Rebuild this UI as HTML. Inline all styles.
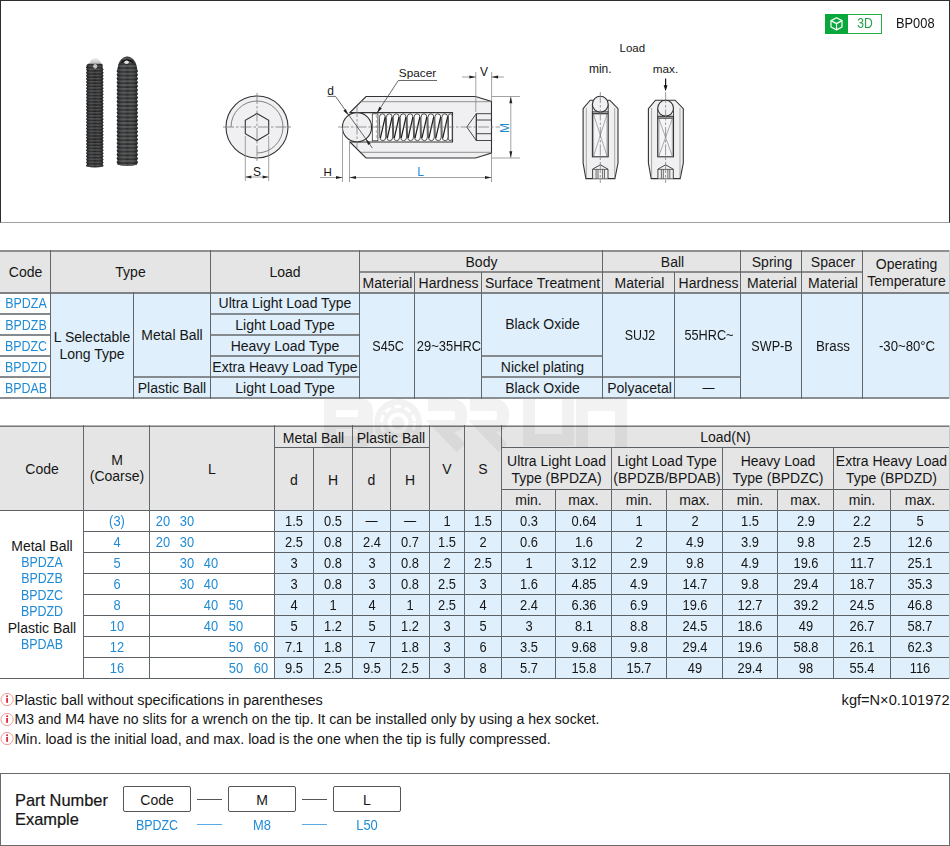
<!DOCTYPE html>
<html><head><meta charset="utf-8"><style>
html,body{margin:0;padding:0;background:#fff;width:950px;height:846px;overflow:hidden}
body{position:relative;font-family:"Liberation Sans", sans-serif;color:#161616}
div,svg{position:absolute}
</style></head><body>
<div style="left:0;top:0;width:950px;height:223px;box-sizing:border-box;border:1px solid #2e2e2e;border-bottom-color:#a0a0a0"></div>
<div style="left:0px;top:250px;width:950px;height:42px;background:#e5e5e5"></div>
<div style="left:50px;top:292px;width:900px;height:106px;background:#dfeffb"></div>
<div style="left:0px;top:292px;width:50px;height:106px;background:#fff"></div>
<div style="left:-274.50px;top:257.10px;width:600px;height:30px;line-height:30px;text-align:center;font-size:14px;">Code</div>
<div style="left:-169.50px;top:257.10px;width:600px;height:30px;line-height:30px;text-align:center;font-size:14px;">Type</div>
<div style="left:-15.00px;top:257.10px;width:600px;height:30px;line-height:30px;text-align:center;font-size:14px;">Load</div>
<div style="left:181.50px;top:247.10px;width:600px;height:30px;line-height:30px;text-align:center;font-size:14px;">Body</div>
<div style="left:87.50px;top:267.60px;width:600px;height:30px;line-height:30px;text-align:center;font-size:14px;">Material</div>
<div style="left:148.50px;top:267.60px;width:600px;height:30px;line-height:30px;text-align:center;font-size:14px;">Hardness</div>
<div style="left:242.50px;top:267.60px;width:600px;height:30px;line-height:30px;text-align:center;font-size:14px;">Surface Treatment</div>
<div style="left:372.50px;top:247.10px;width:600px;height:30px;line-height:30px;text-align:center;font-size:14px;">Ball</div>
<div style="left:339.50px;top:267.60px;width:600px;height:30px;line-height:30px;text-align:center;font-size:14px;">Material</div>
<div style="left:408.50px;top:267.60px;width:600px;height:30px;line-height:30px;text-align:center;font-size:14px;">Hardness</div>
<div style="left:472.00px;top:247.10px;width:600px;height:30px;line-height:30px;text-align:center;font-size:14px;">Spring</div>
<div style="left:472.00px;top:267.60px;width:600px;height:30px;line-height:30px;text-align:center;font-size:14px;">Material</div>
<div style="left:533.00px;top:247.10px;width:600px;height:30px;line-height:30px;text-align:center;font-size:14px;">Spacer</div>
<div style="left:533.00px;top:267.60px;width:600px;height:30px;line-height:30px;text-align:center;font-size:14px;">Material</div>
<div style="left:606.50px;top:249.20px;width:600px;height:30px;line-height:30px;text-align:center;font-size:14px;">Operating</div>
<div style="left:606.50px;top:265.60px;width:600px;height:30px;line-height:30px;text-align:center;font-size:14px;">Temperature</div>
<div style="left:-274.50px;top:288.30px;width:600px;height:30px;line-height:30px;text-align:center;font-size:14px;color:#1f8bd6;transform:scaleX(0.89);transform-origin:50% 50%;">BPDZA</div>
<div style="left:-274.50px;top:309.80px;width:600px;height:30px;line-height:30px;text-align:center;font-size:14px;color:#1f8bd6;transform:scaleX(0.89);transform-origin:50% 50%;">BPDZB</div>
<div style="left:-274.50px;top:330.80px;width:600px;height:30px;line-height:30px;text-align:center;font-size:14px;color:#1f8bd6;transform:scaleX(0.89);transform-origin:50% 50%;">BPDZC</div>
<div style="left:-274.50px;top:351.80px;width:600px;height:30px;line-height:30px;text-align:center;font-size:14px;color:#1f8bd6;transform:scaleX(0.89);transform-origin:50% 50%;">BPDZD</div>
<div style="left:-274.50px;top:372.80px;width:600px;height:30px;line-height:30px;text-align:center;font-size:14px;color:#1f8bd6;transform:scaleX(0.89);transform-origin:50% 50%;">BPDAB</div>
<div style="left:-208.00px;top:322.30px;width:600px;height:30px;line-height:30px;text-align:center;font-size:14px;">L Selectable</div>
<div style="left:-208.00px;top:339.00px;width:600px;height:30px;line-height:30px;text-align:center;font-size:14px;">Long Type</div>
<div style="left:-128.00px;top:319.60px;width:600px;height:30px;line-height:30px;text-align:center;font-size:14px;">Metal Ball</div>
<div style="left:-128.00px;top:372.60px;width:600px;height:30px;line-height:30px;text-align:center;font-size:14px;">Plastic Ball</div>
<div style="left:-15.00px;top:288.00px;width:600px;height:30px;line-height:30px;text-align:center;font-size:14px;">Ultra Light Load Type</div>
<div style="left:-15.00px;top:309.50px;width:600px;height:30px;line-height:30px;text-align:center;font-size:14px;">Light Load Type</div>
<div style="left:-15.00px;top:330.50px;width:600px;height:30px;line-height:30px;text-align:center;font-size:14px;">Heavy Load Type</div>
<div style="left:-15.00px;top:351.50px;width:600px;height:30px;line-height:30px;text-align:center;font-size:14px;">Extra Heavy Load Type</div>
<div style="left:-15.00px;top:372.50px;width:600px;height:30px;line-height:30px;text-align:center;font-size:14px;">Light Load Type</div>
<div style="left:87.50px;top:330.50px;width:600px;height:30px;line-height:30px;text-align:center;font-size:14px;transform:scaleX(0.9);transform-origin:50% 50%;">S45C</div>
<div style="left:148.50px;top:330.50px;width:600px;height:30px;line-height:30px;text-align:center;font-size:14px;transform:scaleX(0.924);transform-origin:50% 50%;">29~35HRC</div>
<div style="left:242.50px;top:309.10px;width:600px;height:30px;line-height:30px;text-align:center;font-size:14px;">Black Oxide</div>
<div style="left:242.50px;top:351.60px;width:600px;height:30px;line-height:30px;text-align:center;font-size:14px;">Nickel plating</div>
<div style="left:242.50px;top:372.60px;width:600px;height:30px;line-height:30px;text-align:center;font-size:14px;">Black Oxide</div>
<div style="left:339.50px;top:320.00px;width:600px;height:30px;line-height:30px;text-align:center;font-size:14px;transform:scaleX(0.89);transform-origin:50% 50%;">SUJ2</div>
<div style="left:339.50px;top:372.60px;width:600px;height:30px;line-height:30px;text-align:center;font-size:14px;">Polyacetal</div>
<div style="left:408.50px;top:320.00px;width:600px;height:30px;line-height:30px;text-align:center;font-size:14px;transform:scaleX(0.907);transform-origin:50% 50%;">55HRC~</div>
<div style="left:408.50px;top:372.60px;width:600px;height:30px;line-height:30px;text-align:center;font-size:12px;">—</div>
<div style="left:472.00px;top:330.50px;width:600px;height:30px;line-height:30px;text-align:center;font-size:14px;transform:scaleX(0.9);transform-origin:50% 50%;">SWP-B</div>
<div style="left:533.00px;top:330.50px;width:600px;height:30px;line-height:30px;text-align:center;font-size:14px;transform:scaleX(0.95);transform-origin:50% 50%;">Brass</div>
<div style="left:606.50px;top:330.50px;width:600px;height:30px;line-height:30px;text-align:center;font-size:14px;transform:scaleX(0.94);transform-origin:50% 50%;">-30~80°C</div>
<div style="left:0px;top:250px;width:950px;height:2px;background:#8f8f8f"></div>
<div style="left:0px;top:292px;width:950px;height:2px;background:#7f8184"></div>
<div style="left:0px;top:397px;width:950px;height:2px;background:#8c8f92"></div>
<div style="left:359px;top:271px;width:503px;height:2px;background:#8a8a8a"></div>
<div style="left:0px;top:313px;width:50px;height:2px;background:#858a8f"></div>
<div style="left:210px;top:313px;width:149px;height:2px;background:#858a8f"></div>
<div style="left:0px;top:334px;width:50px;height:2px;background:#858a8f"></div>
<div style="left:210px;top:334px;width:149px;height:2px;background:#858a8f"></div>
<div style="left:0px;top:355px;width:50px;height:2px;background:#858a8f"></div>
<div style="left:210px;top:355px;width:149px;height:2px;background:#858a8f"></div>
<div style="left:0px;top:376px;width:50px;height:2px;background:#858a8f"></div>
<div style="left:133px;top:376px;width:226px;height:2px;background:#858a8f"></div>
<div style="left:481px;top:376px;width:259px;height:2px;background:#858a8f"></div>
<div style="left:481px;top:355px;width:121px;height:2px;background:#858a8f"></div>
<div style="left:50px;top:250px;width:1px;height:149px;background:#62676c"></div>
<div style="left:210px;top:250px;width:1px;height:149px;background:#62676c"></div>
<div style="left:359px;top:250px;width:1px;height:149px;background:#62676c"></div>
<div style="left:602px;top:250px;width:1px;height:149px;background:#62676c"></div>
<div style="left:740px;top:250px;width:1px;height:149px;background:#62676c"></div>
<div style="left:801px;top:250px;width:1px;height:149px;background:#62676c"></div>
<div style="left:862px;top:250px;width:1px;height:149px;background:#62676c"></div>
<div style="left:133px;top:292px;width:1px;height:107px;background:#62676c"></div>
<div style="left:414px;top:272px;width:1px;height:127px;background:#62676c"></div>
<div style="left:481px;top:272px;width:1px;height:127px;background:#62676c"></div>
<div style="left:674px;top:272px;width:1px;height:127px;background:#62676c"></div>
<div style="left:949px;top:250px;width:1px;height:149px;background:#c8c8c8"></div>
<div style="left:0px;top:426px;width:950px;height:84px;background:#e5e5e5"></div>
<div style="left:274px;top:510px;width:676px;height:169px;background:#dfeffb"></div>
<div style="left:0px;top:510px;width:274px;height:169px;background:#fff"></div>
<div style="left:-258.00px;top:453.60px;width:600px;height:30px;line-height:30px;text-align:center;font-size:14px;">Code</div>
<div style="left:-183.00px;top:445.00px;width:600px;height:30px;line-height:30px;text-align:center;font-size:14px;">M</div>
<div style="left:-183.00px;top:461.20px;width:600px;height:30px;line-height:30px;text-align:center;font-size:14px;">(Coarse)</div>
<div style="left:-88.00px;top:453.60px;width:600px;height:30px;line-height:30px;text-align:center;font-size:14px;">L</div>
<div style="left:13.50px;top:423.10px;width:600px;height:30px;line-height:30px;text-align:center;font-size:14px;">Metal Ball</div>
<div style="left:-6.00px;top:464.60px;width:600px;height:30px;line-height:30px;text-align:center;font-size:14px;">d</div>
<div style="left:33.00px;top:464.60px;width:600px;height:30px;line-height:30px;text-align:center;font-size:14px;">H</div>
<div style="left:91.00px;top:423.10px;width:600px;height:30px;line-height:30px;text-align:center;font-size:14px;">Plastic Ball</div>
<div style="left:71.50px;top:464.60px;width:600px;height:30px;line-height:30px;text-align:center;font-size:14px;">d</div>
<div style="left:110.00px;top:464.60px;width:600px;height:30px;line-height:30px;text-align:center;font-size:14px;">H</div>
<div style="left:147.00px;top:453.60px;width:600px;height:30px;line-height:30px;text-align:center;font-size:14px;">V</div>
<div style="left:183.00px;top:453.60px;width:600px;height:30px;line-height:30px;text-align:center;font-size:14px;">S</div>
<div style="left:425.50px;top:422.00px;width:600px;height:30px;line-height:30px;text-align:center;font-size:14px;">Load(N)</div>
<div style="left:256.50px;top:445.80px;width:600px;height:30px;line-height:30px;text-align:center;font-size:14px;">Ultra Light Load</div>
<div style="left:256.50px;top:462.60px;width:600px;height:30px;line-height:30px;text-align:center;font-size:14px;">Type (BPDZA)</div>
<div style="left:367.00px;top:445.80px;width:600px;height:30px;line-height:30px;text-align:center;font-size:14px;">Light Load Type</div>
<div style="left:367.00px;top:462.60px;width:600px;height:30px;line-height:30px;text-align:center;font-size:14px;">(BPDZB/BPDAB)</div>
<div style="left:478.00px;top:445.80px;width:600px;height:30px;line-height:30px;text-align:center;font-size:14px;">Heavy Load</div>
<div style="left:478.00px;top:462.60px;width:600px;height:30px;line-height:30px;text-align:center;font-size:14px;">Type (BPDZC)</div>
<div style="left:591.50px;top:445.80px;width:600px;height:30px;line-height:30px;text-align:center;font-size:14px;">Extra Heavy Load</div>
<div style="left:591.50px;top:462.60px;width:600px;height:30px;line-height:30px;text-align:center;font-size:14px;">Type (BPDZD)</div>
<div style="left:228.50px;top:485.20px;width:600px;height:30px;line-height:30px;text-align:center;font-size:14px;">min.</div>
<div style="left:283.50px;top:485.20px;width:600px;height:30px;line-height:30px;text-align:center;font-size:14px;">max.</div>
<div style="left:339.00px;top:485.20px;width:600px;height:30px;line-height:30px;text-align:center;font-size:14px;">min.</div>
<div style="left:394.50px;top:485.20px;width:600px;height:30px;line-height:30px;text-align:center;font-size:14px;">max.</div>
<div style="left:450.00px;top:485.20px;width:600px;height:30px;line-height:30px;text-align:center;font-size:14px;">min.</div>
<div style="left:505.50px;top:485.20px;width:600px;height:30px;line-height:30px;text-align:center;font-size:14px;">max.</div>
<div style="left:562.00px;top:485.20px;width:600px;height:30px;line-height:30px;text-align:center;font-size:14px;">min.</div>
<div style="left:620.00px;top:485.20px;width:600px;height:30px;line-height:30px;text-align:center;font-size:14px;">max.</div>
<div style="left:-258.00px;top:530.60px;width:600px;height:30px;line-height:30px;text-align:center;font-size:14px;">Metal Ball</div>
<div style="left:-258.00px;top:546.98px;width:600px;height:30px;line-height:30px;text-align:center;font-size:14px;color:#1f8bd6;transform:scaleX(0.89);transform-origin:50% 50%;">BPDZA</div>
<div style="left:-258.00px;top:563.36px;width:600px;height:30px;line-height:30px;text-align:center;font-size:14px;color:#1f8bd6;transform:scaleX(0.89);transform-origin:50% 50%;">BPDZB</div>
<div style="left:-258.00px;top:579.74px;width:600px;height:30px;line-height:30px;text-align:center;font-size:14px;color:#1f8bd6;transform:scaleX(0.89);transform-origin:50% 50%;">BPDZC</div>
<div style="left:-258.00px;top:596.12px;width:600px;height:30px;line-height:30px;text-align:center;font-size:14px;color:#1f8bd6;transform:scaleX(0.89);transform-origin:50% 50%;">BPDZD</div>
<div style="left:-258.00px;top:612.50px;width:600px;height:30px;line-height:30px;text-align:center;font-size:14px;">Plastic Ball</div>
<div style="left:-258.00px;top:628.88px;width:600px;height:30px;line-height:30px;text-align:center;font-size:14px;color:#1f8bd6;transform:scaleX(0.89);transform-origin:50% 50%;">BPDAB</div>
<div style="left:-183.00px;top:506.30px;width:600px;height:30px;line-height:30px;text-align:center;font-size:14px;color:#1f8bd6;transform:scaleX(0.92);transform-origin:50% 50%;">(3)</div>
<div style="left:-137.30px;top:506.30px;width:600px;height:30px;line-height:30px;text-align:center;font-size:14px;color:#1f8bd6;transform:scaleX(0.92);transform-origin:50% 50%;">20</div>
<div style="left:-113.30px;top:506.30px;width:600px;height:30px;line-height:30px;text-align:center;font-size:14px;color:#1f8bd6;transform:scaleX(0.92);transform-origin:50% 50%;">30</div>
<div style="left:-6.00px;top:506.30px;width:600px;height:30px;line-height:30px;text-align:center;font-size:14px;transform:scaleX(0.92);transform-origin:50% 50%;">1.5</div>
<div style="left:33.00px;top:506.30px;width:600px;height:30px;line-height:30px;text-align:center;font-size:14px;transform:scaleX(0.92);transform-origin:50% 50%;">0.5</div>
<div style="left:71.50px;top:506.30px;width:600px;height:30px;line-height:30px;text-align:center;font-size:12px;">—</div>
<div style="left:110.00px;top:506.30px;width:600px;height:30px;line-height:30px;text-align:center;font-size:12px;">—</div>
<div style="left:147.00px;top:506.30px;width:600px;height:30px;line-height:30px;text-align:center;font-size:14px;transform:scaleX(0.92);transform-origin:50% 50%;">1</div>
<div style="left:183.00px;top:506.30px;width:600px;height:30px;line-height:30px;text-align:center;font-size:14px;transform:scaleX(0.92);transform-origin:50% 50%;">1.5</div>
<div style="left:228.50px;top:506.30px;width:600px;height:30px;line-height:30px;text-align:center;font-size:14px;transform:scaleX(0.92);transform-origin:50% 50%;">0.3</div>
<div style="left:283.50px;top:506.30px;width:600px;height:30px;line-height:30px;text-align:center;font-size:14px;transform:scaleX(0.92);transform-origin:50% 50%;">0.64</div>
<div style="left:339.00px;top:506.30px;width:600px;height:30px;line-height:30px;text-align:center;font-size:14px;transform:scaleX(0.92);transform-origin:50% 50%;">1</div>
<div style="left:394.50px;top:506.30px;width:600px;height:30px;line-height:30px;text-align:center;font-size:14px;transform:scaleX(0.92);transform-origin:50% 50%;">2</div>
<div style="left:450.00px;top:506.30px;width:600px;height:30px;line-height:30px;text-align:center;font-size:14px;transform:scaleX(0.92);transform-origin:50% 50%;">1.5</div>
<div style="left:505.50px;top:506.30px;width:600px;height:30px;line-height:30px;text-align:center;font-size:14px;transform:scaleX(0.92);transform-origin:50% 50%;">2.9</div>
<div style="left:562.00px;top:506.30px;width:600px;height:30px;line-height:30px;text-align:center;font-size:14px;transform:scaleX(0.92);transform-origin:50% 50%;">2.2</div>
<div style="left:620.00px;top:506.30px;width:600px;height:30px;line-height:30px;text-align:center;font-size:14px;transform:scaleX(0.92);transform-origin:50% 50%;">5</div>
<div style="left:-183.00px;top:527.30px;width:600px;height:30px;line-height:30px;text-align:center;font-size:14px;color:#1f8bd6;transform:scaleX(0.92);transform-origin:50% 50%;">4</div>
<div style="left:-137.30px;top:527.30px;width:600px;height:30px;line-height:30px;text-align:center;font-size:14px;color:#1f8bd6;transform:scaleX(0.92);transform-origin:50% 50%;">20</div>
<div style="left:-113.30px;top:527.30px;width:600px;height:30px;line-height:30px;text-align:center;font-size:14px;color:#1f8bd6;transform:scaleX(0.92);transform-origin:50% 50%;">30</div>
<div style="left:-6.00px;top:527.30px;width:600px;height:30px;line-height:30px;text-align:center;font-size:14px;transform:scaleX(0.92);transform-origin:50% 50%;">2.5</div>
<div style="left:33.00px;top:527.30px;width:600px;height:30px;line-height:30px;text-align:center;font-size:14px;transform:scaleX(0.92);transform-origin:50% 50%;">0.8</div>
<div style="left:71.50px;top:527.30px;width:600px;height:30px;line-height:30px;text-align:center;font-size:14px;transform:scaleX(0.92);transform-origin:50% 50%;">2.4</div>
<div style="left:110.00px;top:527.30px;width:600px;height:30px;line-height:30px;text-align:center;font-size:14px;transform:scaleX(0.92);transform-origin:50% 50%;">0.7</div>
<div style="left:147.00px;top:527.30px;width:600px;height:30px;line-height:30px;text-align:center;font-size:14px;transform:scaleX(0.92);transform-origin:50% 50%;">1.5</div>
<div style="left:183.00px;top:527.30px;width:600px;height:30px;line-height:30px;text-align:center;font-size:14px;transform:scaleX(0.92);transform-origin:50% 50%;">2</div>
<div style="left:228.50px;top:527.30px;width:600px;height:30px;line-height:30px;text-align:center;font-size:14px;transform:scaleX(0.92);transform-origin:50% 50%;">0.6</div>
<div style="left:283.50px;top:527.30px;width:600px;height:30px;line-height:30px;text-align:center;font-size:14px;transform:scaleX(0.92);transform-origin:50% 50%;">1.6</div>
<div style="left:339.00px;top:527.30px;width:600px;height:30px;line-height:30px;text-align:center;font-size:14px;transform:scaleX(0.92);transform-origin:50% 50%;">2</div>
<div style="left:394.50px;top:527.30px;width:600px;height:30px;line-height:30px;text-align:center;font-size:14px;transform:scaleX(0.92);transform-origin:50% 50%;">4.9</div>
<div style="left:450.00px;top:527.30px;width:600px;height:30px;line-height:30px;text-align:center;font-size:14px;transform:scaleX(0.92);transform-origin:50% 50%;">3.9</div>
<div style="left:505.50px;top:527.30px;width:600px;height:30px;line-height:30px;text-align:center;font-size:14px;transform:scaleX(0.92);transform-origin:50% 50%;">9.8</div>
<div style="left:562.00px;top:527.30px;width:600px;height:30px;line-height:30px;text-align:center;font-size:14px;transform:scaleX(0.92);transform-origin:50% 50%;">2.5</div>
<div style="left:620.00px;top:527.30px;width:600px;height:30px;line-height:30px;text-align:center;font-size:14px;transform:scaleX(0.92);transform-origin:50% 50%;">12.6</div>
<div style="left:-183.00px;top:548.30px;width:600px;height:30px;line-height:30px;text-align:center;font-size:14px;color:#1f8bd6;transform:scaleX(0.92);transform-origin:50% 50%;">5</div>
<div style="left:-113.30px;top:548.30px;width:600px;height:30px;line-height:30px;text-align:center;font-size:14px;color:#1f8bd6;transform:scaleX(0.92);transform-origin:50% 50%;">30</div>
<div style="left:-88.60px;top:548.30px;width:600px;height:30px;line-height:30px;text-align:center;font-size:14px;color:#1f8bd6;transform:scaleX(0.92);transform-origin:50% 50%;">40</div>
<div style="left:-6.00px;top:548.30px;width:600px;height:30px;line-height:30px;text-align:center;font-size:14px;transform:scaleX(0.92);transform-origin:50% 50%;">3</div>
<div style="left:33.00px;top:548.30px;width:600px;height:30px;line-height:30px;text-align:center;font-size:14px;transform:scaleX(0.92);transform-origin:50% 50%;">0.8</div>
<div style="left:71.50px;top:548.30px;width:600px;height:30px;line-height:30px;text-align:center;font-size:14px;transform:scaleX(0.92);transform-origin:50% 50%;">3</div>
<div style="left:110.00px;top:548.30px;width:600px;height:30px;line-height:30px;text-align:center;font-size:14px;transform:scaleX(0.92);transform-origin:50% 50%;">0.8</div>
<div style="left:147.00px;top:548.30px;width:600px;height:30px;line-height:30px;text-align:center;font-size:14px;transform:scaleX(0.92);transform-origin:50% 50%;">2</div>
<div style="left:183.00px;top:548.30px;width:600px;height:30px;line-height:30px;text-align:center;font-size:14px;transform:scaleX(0.92);transform-origin:50% 50%;">2.5</div>
<div style="left:228.50px;top:548.30px;width:600px;height:30px;line-height:30px;text-align:center;font-size:14px;transform:scaleX(0.92);transform-origin:50% 50%;">1</div>
<div style="left:283.50px;top:548.30px;width:600px;height:30px;line-height:30px;text-align:center;font-size:14px;transform:scaleX(0.92);transform-origin:50% 50%;">3.12</div>
<div style="left:339.00px;top:548.30px;width:600px;height:30px;line-height:30px;text-align:center;font-size:14px;transform:scaleX(0.92);transform-origin:50% 50%;">2.9</div>
<div style="left:394.50px;top:548.30px;width:600px;height:30px;line-height:30px;text-align:center;font-size:14px;transform:scaleX(0.92);transform-origin:50% 50%;">9.8</div>
<div style="left:450.00px;top:548.30px;width:600px;height:30px;line-height:30px;text-align:center;font-size:14px;transform:scaleX(0.92);transform-origin:50% 50%;">4.9</div>
<div style="left:505.50px;top:548.30px;width:600px;height:30px;line-height:30px;text-align:center;font-size:14px;transform:scaleX(0.92);transform-origin:50% 50%;">19.6</div>
<div style="left:562.00px;top:548.30px;width:600px;height:30px;line-height:30px;text-align:center;font-size:14px;transform:scaleX(0.92);transform-origin:50% 50%;">11.7</div>
<div style="left:620.00px;top:548.30px;width:600px;height:30px;line-height:30px;text-align:center;font-size:14px;transform:scaleX(0.92);transform-origin:50% 50%;">25.1</div>
<div style="left:-183.00px;top:569.30px;width:600px;height:30px;line-height:30px;text-align:center;font-size:14px;color:#1f8bd6;transform:scaleX(0.92);transform-origin:50% 50%;">6</div>
<div style="left:-113.30px;top:569.30px;width:600px;height:30px;line-height:30px;text-align:center;font-size:14px;color:#1f8bd6;transform:scaleX(0.92);transform-origin:50% 50%;">30</div>
<div style="left:-88.60px;top:569.30px;width:600px;height:30px;line-height:30px;text-align:center;font-size:14px;color:#1f8bd6;transform:scaleX(0.92);transform-origin:50% 50%;">40</div>
<div style="left:-6.00px;top:569.30px;width:600px;height:30px;line-height:30px;text-align:center;font-size:14px;transform:scaleX(0.92);transform-origin:50% 50%;">3</div>
<div style="left:33.00px;top:569.30px;width:600px;height:30px;line-height:30px;text-align:center;font-size:14px;transform:scaleX(0.92);transform-origin:50% 50%;">0.8</div>
<div style="left:71.50px;top:569.30px;width:600px;height:30px;line-height:30px;text-align:center;font-size:14px;transform:scaleX(0.92);transform-origin:50% 50%;">3</div>
<div style="left:110.00px;top:569.30px;width:600px;height:30px;line-height:30px;text-align:center;font-size:14px;transform:scaleX(0.92);transform-origin:50% 50%;">0.8</div>
<div style="left:147.00px;top:569.30px;width:600px;height:30px;line-height:30px;text-align:center;font-size:14px;transform:scaleX(0.92);transform-origin:50% 50%;">2.5</div>
<div style="left:183.00px;top:569.30px;width:600px;height:30px;line-height:30px;text-align:center;font-size:14px;transform:scaleX(0.92);transform-origin:50% 50%;">3</div>
<div style="left:228.50px;top:569.30px;width:600px;height:30px;line-height:30px;text-align:center;font-size:14px;transform:scaleX(0.92);transform-origin:50% 50%;">1.6</div>
<div style="left:283.50px;top:569.30px;width:600px;height:30px;line-height:30px;text-align:center;font-size:14px;transform:scaleX(0.92);transform-origin:50% 50%;">4.85</div>
<div style="left:339.00px;top:569.30px;width:600px;height:30px;line-height:30px;text-align:center;font-size:14px;transform:scaleX(0.92);transform-origin:50% 50%;">4.9</div>
<div style="left:394.50px;top:569.30px;width:600px;height:30px;line-height:30px;text-align:center;font-size:14px;transform:scaleX(0.92);transform-origin:50% 50%;">14.7</div>
<div style="left:450.00px;top:569.30px;width:600px;height:30px;line-height:30px;text-align:center;font-size:14px;transform:scaleX(0.92);transform-origin:50% 50%;">9.8</div>
<div style="left:505.50px;top:569.30px;width:600px;height:30px;line-height:30px;text-align:center;font-size:14px;transform:scaleX(0.92);transform-origin:50% 50%;">29.4</div>
<div style="left:562.00px;top:569.30px;width:600px;height:30px;line-height:30px;text-align:center;font-size:14px;transform:scaleX(0.92);transform-origin:50% 50%;">18.7</div>
<div style="left:620.00px;top:569.30px;width:600px;height:30px;line-height:30px;text-align:center;font-size:14px;transform:scaleX(0.92);transform-origin:50% 50%;">35.3</div>
<div style="left:-183.00px;top:590.30px;width:600px;height:30px;line-height:30px;text-align:center;font-size:14px;color:#1f8bd6;transform:scaleX(0.92);transform-origin:50% 50%;">8</div>
<div style="left:-88.60px;top:590.30px;width:600px;height:30px;line-height:30px;text-align:center;font-size:14px;color:#1f8bd6;transform:scaleX(0.92);transform-origin:50% 50%;">40</div>
<div style="left:-63.60px;top:590.30px;width:600px;height:30px;line-height:30px;text-align:center;font-size:14px;color:#1f8bd6;transform:scaleX(0.92);transform-origin:50% 50%;">50</div>
<div style="left:-6.00px;top:590.30px;width:600px;height:30px;line-height:30px;text-align:center;font-size:14px;transform:scaleX(0.92);transform-origin:50% 50%;">4</div>
<div style="left:33.00px;top:590.30px;width:600px;height:30px;line-height:30px;text-align:center;font-size:14px;transform:scaleX(0.92);transform-origin:50% 50%;">1</div>
<div style="left:71.50px;top:590.30px;width:600px;height:30px;line-height:30px;text-align:center;font-size:14px;transform:scaleX(0.92);transform-origin:50% 50%;">4</div>
<div style="left:110.00px;top:590.30px;width:600px;height:30px;line-height:30px;text-align:center;font-size:14px;transform:scaleX(0.92);transform-origin:50% 50%;">1</div>
<div style="left:147.00px;top:590.30px;width:600px;height:30px;line-height:30px;text-align:center;font-size:14px;transform:scaleX(0.92);transform-origin:50% 50%;">2.5</div>
<div style="left:183.00px;top:590.30px;width:600px;height:30px;line-height:30px;text-align:center;font-size:14px;transform:scaleX(0.92);transform-origin:50% 50%;">4</div>
<div style="left:228.50px;top:590.30px;width:600px;height:30px;line-height:30px;text-align:center;font-size:14px;transform:scaleX(0.92);transform-origin:50% 50%;">2.4</div>
<div style="left:283.50px;top:590.30px;width:600px;height:30px;line-height:30px;text-align:center;font-size:14px;transform:scaleX(0.92);transform-origin:50% 50%;">6.36</div>
<div style="left:339.00px;top:590.30px;width:600px;height:30px;line-height:30px;text-align:center;font-size:14px;transform:scaleX(0.92);transform-origin:50% 50%;">6.9</div>
<div style="left:394.50px;top:590.30px;width:600px;height:30px;line-height:30px;text-align:center;font-size:14px;transform:scaleX(0.92);transform-origin:50% 50%;">19.6</div>
<div style="left:450.00px;top:590.30px;width:600px;height:30px;line-height:30px;text-align:center;font-size:14px;transform:scaleX(0.92);transform-origin:50% 50%;">12.7</div>
<div style="left:505.50px;top:590.30px;width:600px;height:30px;line-height:30px;text-align:center;font-size:14px;transform:scaleX(0.92);transform-origin:50% 50%;">39.2</div>
<div style="left:562.00px;top:590.30px;width:600px;height:30px;line-height:30px;text-align:center;font-size:14px;transform:scaleX(0.92);transform-origin:50% 50%;">24.5</div>
<div style="left:620.00px;top:590.30px;width:600px;height:30px;line-height:30px;text-align:center;font-size:14px;transform:scaleX(0.92);transform-origin:50% 50%;">46.8</div>
<div style="left:-183.00px;top:611.30px;width:600px;height:30px;line-height:30px;text-align:center;font-size:14px;color:#1f8bd6;transform:scaleX(0.92);transform-origin:50% 50%;">10</div>
<div style="left:-88.60px;top:611.30px;width:600px;height:30px;line-height:30px;text-align:center;font-size:14px;color:#1f8bd6;transform:scaleX(0.92);transform-origin:50% 50%;">40</div>
<div style="left:-63.60px;top:611.30px;width:600px;height:30px;line-height:30px;text-align:center;font-size:14px;color:#1f8bd6;transform:scaleX(0.92);transform-origin:50% 50%;">50</div>
<div style="left:-6.00px;top:611.30px;width:600px;height:30px;line-height:30px;text-align:center;font-size:14px;transform:scaleX(0.92);transform-origin:50% 50%;">5</div>
<div style="left:33.00px;top:611.30px;width:600px;height:30px;line-height:30px;text-align:center;font-size:14px;transform:scaleX(0.92);transform-origin:50% 50%;">1.2</div>
<div style="left:71.50px;top:611.30px;width:600px;height:30px;line-height:30px;text-align:center;font-size:14px;transform:scaleX(0.92);transform-origin:50% 50%;">5</div>
<div style="left:110.00px;top:611.30px;width:600px;height:30px;line-height:30px;text-align:center;font-size:14px;transform:scaleX(0.92);transform-origin:50% 50%;">1.2</div>
<div style="left:147.00px;top:611.30px;width:600px;height:30px;line-height:30px;text-align:center;font-size:14px;transform:scaleX(0.92);transform-origin:50% 50%;">3</div>
<div style="left:183.00px;top:611.30px;width:600px;height:30px;line-height:30px;text-align:center;font-size:14px;transform:scaleX(0.92);transform-origin:50% 50%;">5</div>
<div style="left:228.50px;top:611.30px;width:600px;height:30px;line-height:30px;text-align:center;font-size:14px;transform:scaleX(0.92);transform-origin:50% 50%;">3</div>
<div style="left:283.50px;top:611.30px;width:600px;height:30px;line-height:30px;text-align:center;font-size:14px;transform:scaleX(0.92);transform-origin:50% 50%;">8.1</div>
<div style="left:339.00px;top:611.30px;width:600px;height:30px;line-height:30px;text-align:center;font-size:14px;transform:scaleX(0.92);transform-origin:50% 50%;">8.8</div>
<div style="left:394.50px;top:611.30px;width:600px;height:30px;line-height:30px;text-align:center;font-size:14px;transform:scaleX(0.92);transform-origin:50% 50%;">24.5</div>
<div style="left:450.00px;top:611.30px;width:600px;height:30px;line-height:30px;text-align:center;font-size:14px;transform:scaleX(0.92);transform-origin:50% 50%;">18.6</div>
<div style="left:505.50px;top:611.30px;width:600px;height:30px;line-height:30px;text-align:center;font-size:14px;transform:scaleX(0.92);transform-origin:50% 50%;">49</div>
<div style="left:562.00px;top:611.30px;width:600px;height:30px;line-height:30px;text-align:center;font-size:14px;transform:scaleX(0.92);transform-origin:50% 50%;">26.7</div>
<div style="left:620.00px;top:611.30px;width:600px;height:30px;line-height:30px;text-align:center;font-size:14px;transform:scaleX(0.92);transform-origin:50% 50%;">58.7</div>
<div style="left:-183.00px;top:632.30px;width:600px;height:30px;line-height:30px;text-align:center;font-size:14px;color:#1f8bd6;transform:scaleX(0.92);transform-origin:50% 50%;">12</div>
<div style="left:-63.60px;top:632.30px;width:600px;height:30px;line-height:30px;text-align:center;font-size:14px;color:#1f8bd6;transform:scaleX(0.92);transform-origin:50% 50%;">50</div>
<div style="left:-39.00px;top:632.30px;width:600px;height:30px;line-height:30px;text-align:center;font-size:14px;color:#1f8bd6;transform:scaleX(0.92);transform-origin:50% 50%;">60</div>
<div style="left:-6.00px;top:632.30px;width:600px;height:30px;line-height:30px;text-align:center;font-size:14px;transform:scaleX(0.92);transform-origin:50% 50%;">7.1</div>
<div style="left:33.00px;top:632.30px;width:600px;height:30px;line-height:30px;text-align:center;font-size:14px;transform:scaleX(0.92);transform-origin:50% 50%;">1.8</div>
<div style="left:71.50px;top:632.30px;width:600px;height:30px;line-height:30px;text-align:center;font-size:14px;transform:scaleX(0.92);transform-origin:50% 50%;">7</div>
<div style="left:110.00px;top:632.30px;width:600px;height:30px;line-height:30px;text-align:center;font-size:14px;transform:scaleX(0.92);transform-origin:50% 50%;">1.8</div>
<div style="left:147.00px;top:632.30px;width:600px;height:30px;line-height:30px;text-align:center;font-size:14px;transform:scaleX(0.92);transform-origin:50% 50%;">3</div>
<div style="left:183.00px;top:632.30px;width:600px;height:30px;line-height:30px;text-align:center;font-size:14px;transform:scaleX(0.92);transform-origin:50% 50%;">6</div>
<div style="left:228.50px;top:632.30px;width:600px;height:30px;line-height:30px;text-align:center;font-size:14px;transform:scaleX(0.92);transform-origin:50% 50%;">3.5</div>
<div style="left:283.50px;top:632.30px;width:600px;height:30px;line-height:30px;text-align:center;font-size:14px;transform:scaleX(0.92);transform-origin:50% 50%;">9.68</div>
<div style="left:339.00px;top:632.30px;width:600px;height:30px;line-height:30px;text-align:center;font-size:14px;transform:scaleX(0.92);transform-origin:50% 50%;">9.8</div>
<div style="left:394.50px;top:632.30px;width:600px;height:30px;line-height:30px;text-align:center;font-size:14px;transform:scaleX(0.92);transform-origin:50% 50%;">29.4</div>
<div style="left:450.00px;top:632.30px;width:600px;height:30px;line-height:30px;text-align:center;font-size:14px;transform:scaleX(0.92);transform-origin:50% 50%;">19.6</div>
<div style="left:505.50px;top:632.30px;width:600px;height:30px;line-height:30px;text-align:center;font-size:14px;transform:scaleX(0.92);transform-origin:50% 50%;">58.8</div>
<div style="left:562.00px;top:632.30px;width:600px;height:30px;line-height:30px;text-align:center;font-size:14px;transform:scaleX(0.92);transform-origin:50% 50%;">26.1</div>
<div style="left:620.00px;top:632.30px;width:600px;height:30px;line-height:30px;text-align:center;font-size:14px;transform:scaleX(0.92);transform-origin:50% 50%;">62.3</div>
<div style="left:-183.00px;top:653.30px;width:600px;height:30px;line-height:30px;text-align:center;font-size:14px;color:#1f8bd6;transform:scaleX(0.92);transform-origin:50% 50%;">16</div>
<div style="left:-63.60px;top:653.30px;width:600px;height:30px;line-height:30px;text-align:center;font-size:14px;color:#1f8bd6;transform:scaleX(0.92);transform-origin:50% 50%;">50</div>
<div style="left:-39.00px;top:653.30px;width:600px;height:30px;line-height:30px;text-align:center;font-size:14px;color:#1f8bd6;transform:scaleX(0.92);transform-origin:50% 50%;">60</div>
<div style="left:-6.00px;top:653.30px;width:600px;height:30px;line-height:30px;text-align:center;font-size:14px;transform:scaleX(0.92);transform-origin:50% 50%;">9.5</div>
<div style="left:33.00px;top:653.30px;width:600px;height:30px;line-height:30px;text-align:center;font-size:14px;transform:scaleX(0.92);transform-origin:50% 50%;">2.5</div>
<div style="left:71.50px;top:653.30px;width:600px;height:30px;line-height:30px;text-align:center;font-size:14px;transform:scaleX(0.92);transform-origin:50% 50%;">9.5</div>
<div style="left:110.00px;top:653.30px;width:600px;height:30px;line-height:30px;text-align:center;font-size:14px;transform:scaleX(0.92);transform-origin:50% 50%;">2.5</div>
<div style="left:147.00px;top:653.30px;width:600px;height:30px;line-height:30px;text-align:center;font-size:14px;transform:scaleX(0.92);transform-origin:50% 50%;">3</div>
<div style="left:183.00px;top:653.30px;width:600px;height:30px;line-height:30px;text-align:center;font-size:14px;transform:scaleX(0.92);transform-origin:50% 50%;">8</div>
<div style="left:228.50px;top:653.30px;width:600px;height:30px;line-height:30px;text-align:center;font-size:14px;transform:scaleX(0.92);transform-origin:50% 50%;">5.7</div>
<div style="left:283.50px;top:653.30px;width:600px;height:30px;line-height:30px;text-align:center;font-size:14px;transform:scaleX(0.92);transform-origin:50% 50%;">15.8</div>
<div style="left:339.00px;top:653.30px;width:600px;height:30px;line-height:30px;text-align:center;font-size:14px;transform:scaleX(0.92);transform-origin:50% 50%;">15.7</div>
<div style="left:394.50px;top:653.30px;width:600px;height:30px;line-height:30px;text-align:center;font-size:14px;transform:scaleX(0.92);transform-origin:50% 50%;">49</div>
<div style="left:450.00px;top:653.30px;width:600px;height:30px;line-height:30px;text-align:center;font-size:14px;transform:scaleX(0.92);transform-origin:50% 50%;">29.4</div>
<div style="left:505.50px;top:653.30px;width:600px;height:30px;line-height:30px;text-align:center;font-size:14px;transform:scaleX(0.92);transform-origin:50% 50%;">98</div>
<div style="left:562.00px;top:653.30px;width:600px;height:30px;line-height:30px;text-align:center;font-size:14px;transform:scaleX(0.92);transform-origin:50% 50%;">55.4</div>
<div style="left:620.00px;top:653.30px;width:600px;height:30px;line-height:30px;text-align:center;font-size:14px;transform:scaleX(0.92);transform-origin:50% 50%;">116</div>
<div style="left:0px;top:426px;width:950px;height:1px;background:#777a7d"></div>
<div style="left:0px;top:425px;width:950px;height:1px;background:#b5b5b5"></div>
<div style="left:0px;top:510px;width:950px;height:1px;background:#5c6166"></div>
<div style="left:0px;top:678px;width:950px;height:1px;background:#5c6166"></div>
<div style="left:274px;top:447px;width:155px;height:1px;background:#5c6166"></div>
<div style="left:501px;top:447px;width:448px;height:1px;background:#5c6166"></div>
<div style="left:501px;top:489px;width:448px;height:1px;background:#5c6166"></div>
<div style="left:83px;top:531px;width:866px;height:1px;background:#5c6166"></div>
<div style="left:83px;top:552px;width:866px;height:1px;background:#5c6166"></div>
<div style="left:83px;top:573px;width:866px;height:1px;background:#5c6166"></div>
<div style="left:83px;top:594px;width:866px;height:1px;background:#5c6166"></div>
<div style="left:83px;top:615px;width:866px;height:1px;background:#5c6166"></div>
<div style="left:83px;top:636px;width:866px;height:1px;background:#5c6166"></div>
<div style="left:83px;top:657px;width:866px;height:1px;background:#5c6166"></div>
<div style="left:83px;top:425px;width:1px;height:254px;background:#62676c"></div>
<div style="left:149px;top:425px;width:1px;height:254px;background:#62676c"></div>
<div style="left:274px;top:425px;width:1px;height:254px;background:#62676c"></div>
<div style="left:352px;top:425px;width:1px;height:254px;background:#62676c"></div>
<div style="left:429px;top:425px;width:1px;height:254px;background:#62676c"></div>
<div style="left:464px;top:425px;width:1px;height:254px;background:#62676c"></div>
<div style="left:501px;top:425px;width:1px;height:254px;background:#62676c"></div>
<div style="left:313px;top:448px;width:1px;height:231px;background:#62676c"></div>
<div style="left:390px;top:448px;width:1px;height:231px;background:#62676c"></div>
<div style="left:611px;top:448px;width:1px;height:231px;background:#62676c"></div>
<div style="left:722px;top:448px;width:1px;height:231px;background:#62676c"></div>
<div style="left:833px;top:448px;width:1px;height:231px;background:#62676c"></div>
<div style="left:555px;top:489px;width:1px;height:190px;background:#62676c"></div>
<div style="left:666px;top:489px;width:1px;height:190px;background:#62676c"></div>
<div style="left:777px;top:489px;width:1px;height:190px;background:#62676c"></div>
<div style="left:890px;top:489px;width:1px;height:190px;background:#62676c"></div>
<div style="left:949px;top:425px;width:1px;height:254px;background:#c8c8c8"></div>
<svg style="left:0px;top:692.2px" width="15" height="15" viewBox="0 0 15 15"><circle cx="7.1" cy="7.5" r="6.1" fill="none" stroke="#f29a9a" stroke-width="1"/><rect x="6.2" y="6" width="1.8" height="4.8" fill="#e22a36"/><rect x="6.2" y="3.4" width="1.8" height="1.7" fill="#e22a36"/></svg>
<div style="left:14.50px;top:684.70px;height:30px;line-height:30px;white-space:nowrap;font-size:14.45px;">Plastic ball without specifications in parentheses</div>
<svg style="left:0px;top:711.6px" width="15" height="15" viewBox="0 0 15 15"><circle cx="7.1" cy="7.5" r="6.1" fill="none" stroke="#f29a9a" stroke-width="1"/><rect x="6.2" y="6" width="1.8" height="4.8" fill="#e22a36"/><rect x="6.2" y="3.4" width="1.8" height="1.7" fill="#e22a36"/></svg>
<div style="left:14.50px;top:704.10px;height:30px;line-height:30px;white-space:nowrap;font-size:14.05px;">M3 and M4 have no slits for a wrench on the tip. It can be installed only by using a hex socket.</div>
<svg style="left:0px;top:731.0px" width="15" height="15" viewBox="0 0 15 15"><circle cx="7.1" cy="7.5" r="6.1" fill="none" stroke="#f29a9a" stroke-width="1"/><rect x="6.2" y="6" width="1.8" height="4.8" fill="#e22a36"/><rect x="6.2" y="3.4" width="1.8" height="1.7" fill="#e22a36"/></svg>
<div style="left:14.50px;top:723.50px;height:30px;line-height:30px;white-space:nowrap;font-size:14.26px;">Min. load is the initial load, and max. load is the one when the tip is fully compressed.</div>
<div style="right:0.50px;top:685.00px;height:30px;line-height:30px;white-space:nowrap;text-align:right;font-size:14.6px;">kgf=N×0.101972</div>
<div style="left:0;top:773px;width:950px;height:73px;box-sizing:border-box;border:1px solid #6a6a6a"></div>
<div style="left:15.00px;top:784.60px;height:30px;line-height:30px;white-space:nowrap;font-size:16.4px;-webkit-text-stroke:0.22px #161616;">Part Number</div>
<div style="left:15.00px;top:803.70px;height:30px;line-height:30px;white-space:nowrap;font-size:16.4px;-webkit-text-stroke:0.22px #161616;">Example</div>
<div style="left:123px;top:786px;width:68px;height:26px;box-sizing:border-box;border:1px solid #555;border-radius:2px"></div>
<div style="left:-143.00px;top:784.50px;width:600px;height:30px;line-height:30px;text-align:center;font-size:14px;">Code</div>
<div style="left:-143.00px;top:809.70px;width:600px;height:30px;line-height:30px;text-align:center;font-size:14px;color:#1f8bd6;transform:scaleX(0.89);transform-origin:50% 50%;">BPDZC</div>
<div style="left:228px;top:786px;width:68px;height:26px;box-sizing:border-box;border:1px solid #555;border-radius:2px"></div>
<div style="left:-38.00px;top:784.50px;width:600px;height:30px;line-height:30px;text-align:center;font-size:14px;">M</div>
<div style="left:-38.00px;top:809.70px;width:600px;height:30px;line-height:30px;text-align:center;font-size:14px;color:#1f8bd6;transform:scaleX(0.92);transform-origin:50% 50%;">M8</div>
<div style="left:333px;top:786px;width:68px;height:26px;box-sizing:border-box;border:1px solid #555;border-radius:2px"></div>
<div style="left:67.00px;top:784.50px;width:600px;height:30px;line-height:30px;text-align:center;font-size:14px;">L</div>
<div style="left:67.00px;top:809.70px;width:600px;height:30px;line-height:30px;text-align:center;font-size:14px;color:#1f8bd6;transform:scaleX(0.92);transform-origin:50% 50%;">L50</div>
<div style="left:197px;top:799px;width:25px;height:1px;background:#555"></div>
<div style="left:197px;top:824px;width:25px;height:1px;background:#5aaae6"></div>
<div style="left:302px;top:799px;width:25px;height:1px;background:#555"></div>
<div style="left:302px;top:824px;width:25px;height:1px;background:#5aaae6"></div>
<div style="left:825px;top:14px;width:57px;height:20px;box-sizing:border-box;border:1px solid #27b04a"></div>
<div style="left:825px;top:14px;width:23px;height:20px;background:#0aa83c"></div>
<svg style="left:828px;top:16px" width="17" height="16" viewBox="0 0 17 16"><g fill="none" stroke="#fff" stroke-width="1.2" stroke-linejoin="round"><path d="M8.5 1.8 L14 4.6 V11 L8.5 13.9 L3 11 V4.6 Z"/><path d="M3 4.6 L8.5 7.6 L14 4.6 M8.5 7.6 V13.9"/></g></svg>
<div style="left:564.70px;top:8.80px;width:600px;height:30px;line-height:30px;text-align:center;font-size:13.8px;color:#1fa647;transform:scaleX(0.88);transform-origin:50% 50%;-webkit-text-stroke:0;">3D</div>
<div style="left:896.30px;top:8.80px;height:30px;line-height:30px;white-space:nowrap;font-size:13.8px;transform:scaleX(0.93);transform-origin:0 50%;-webkit-text-stroke:0;">BP008</div>
<svg style="left:0;top:0" width="950" height="222" viewBox="0 0 950 222"><defs><pattern id="thrL" x="0" y="0.3" width="20" height="3.1" patternUnits="userSpaceOnUse"><rect width="20" height="3.1" fill="#3b3d3f"/><rect y="1.7" width="20" height="1.4" fill="#131415"/></pattern><pattern id="thrR" x="0" y="0.5" width="30" height="3.8" patternUnits="userSpaceOnUse"><rect width="30" height="3.8" fill="#46484a"/><rect y="2.1" width="30" height="1.7" fill="#1c1d1e"/></pattern><linearGradient id="shL" x1="0" x2="1"><stop offset="0" stop-color="#000" stop-opacity=".45"/><stop offset=".5" stop-color="#fff" stop-opacity=".05"/><stop offset="1" stop-color="#000" stop-opacity=".4"/></linearGradient><linearGradient id="ballG" x1="0" y1="0" x2="0" y2="1"><stop offset="0" stop-color="#eeeeee"/><stop offset="1" stop-color="#b8b8b8"/></linearGradient></defs><path d="M89.3 64 Q90.5 58.3 95.2 58.3 Q100 58.3 101.2 64 Z" fill="url(#ballG)"/><path d="M88 63.8 Q86.5 64.5 86 68 L87.10 68.00 L86.00 69.55 L87.10 71.10 L86.00 72.65 L87.10 74.20 L86.00 75.75 L87.10 77.30 L86.00 78.85 L87.10 80.40 L86.00 81.95 L87.10 83.50 L86.00 85.05 L87.10 86.60 L86.00 88.15 L87.10 89.70 L86.00 91.25 L87.10 92.80 L86.00 94.35 L87.10 95.90 L86.00 97.45 L87.10 99.00 L86.00 100.55 L87.10 102.10 L86.00 103.65 L87.10 105.20 L86.00 106.75 L87.10 108.30 L86.00 109.85 L87.10 111.40 L86.00 112.95 L87.10 114.50 L86.00 116.05 L87.10 117.60 L86.00 119.15 L87.10 120.70 L86.00 122.25 L87.10 123.80 L86.00 125.35 L87.10 126.90 L86.00 128.45 L87.10 130.00 L86.00 131.55 L87.10 133.10 L86.00 134.65 L87.10 136.20 L86.00 137.75 L87.10 139.30 L86.00 140.85 L87.10 142.40 L86.00 143.95 L87.10 145.50 L86.00 147.05 L87.10 148.60 L86.00 150.15 L87.10 151.70 L86.00 153.25 L87.10 154.80 L86.00 156.35 L87.10 157.90 L86.00 159.45 L87.10 161.00 L86.00 162.55 L87.10 164.10 L86.00 165.65 L86.60 166.50 Q95 168.5 103.00 166.50 L103.00 166.50 L103.60 165.65 L102.50 164.10 L103.60 162.55 L102.50 161.00 L103.60 159.45 L102.50 157.90 L103.60 156.35 L102.50 154.80 L103.60 153.25 L102.50 151.70 L103.60 150.15 L102.50 148.60 L103.60 147.05 L102.50 145.50 L103.60 143.95 L102.50 142.40 L103.60 140.85 L102.50 139.30 L103.60 137.75 L102.50 136.20 L103.60 134.65 L102.50 133.10 L103.60 131.55 L102.50 130.00 L103.60 128.45 L102.50 126.90 L103.60 125.35 L102.50 123.80 L103.60 122.25 L102.50 120.70 L103.60 119.15 L102.50 117.60 L103.60 116.05 L102.50 114.50 L103.60 112.95 L102.50 111.40 L103.60 109.85 L102.50 108.30 L103.60 106.75 L102.50 105.20 L103.60 103.65 L102.50 102.10 L103.60 100.55 L102.50 99.00 L103.60 97.45 L102.50 95.90 L103.60 94.35 L102.50 92.80 L103.60 91.25 L102.50 89.70 L103.60 88.15 L102.50 86.60 L103.60 85.05 L102.50 83.50 L103.60 81.95 L102.50 80.40 L103.60 78.85 L102.50 77.30 L103.60 75.75 L102.50 74.20 L103.60 72.65 L102.50 71.10 L103.60 69.55 L102.50 68.00 Q103 64.5 102 63.8 Z" fill="url(#thrL)"/><path d="M88 63.8 Q86.5 64.5 86 68 L87.10 68.00 L86.00 69.55 L87.10 71.10 L86.00 72.65 L87.10 74.20 L86.00 75.75 L87.10 77.30 L86.00 78.85 L87.10 80.40 L86.00 81.95 L87.10 83.50 L86.00 85.05 L87.10 86.60 L86.00 88.15 L87.10 89.70 L86.00 91.25 L87.10 92.80 L86.00 94.35 L87.10 95.90 L86.00 97.45 L87.10 99.00 L86.00 100.55 L87.10 102.10 L86.00 103.65 L87.10 105.20 L86.00 106.75 L87.10 108.30 L86.00 109.85 L87.10 111.40 L86.00 112.95 L87.10 114.50 L86.00 116.05 L87.10 117.60 L86.00 119.15 L87.10 120.70 L86.00 122.25 L87.10 123.80 L86.00 125.35 L87.10 126.90 L86.00 128.45 L87.10 130.00 L86.00 131.55 L87.10 133.10 L86.00 134.65 L87.10 136.20 L86.00 137.75 L87.10 139.30 L86.00 140.85 L87.10 142.40 L86.00 143.95 L87.10 145.50 L86.00 147.05 L87.10 148.60 L86.00 150.15 L87.10 151.70 L86.00 153.25 L87.10 154.80 L86.00 156.35 L87.10 157.90 L86.00 159.45 L87.10 161.00 L86.00 162.55 L87.10 164.10 L86.00 165.65 L86.60 166.50 Q95 168.5 103.00 166.50 L103.00 166.50 L103.60 165.65 L102.50 164.10 L103.60 162.55 L102.50 161.00 L103.60 159.45 L102.50 157.90 L103.60 156.35 L102.50 154.80 L103.60 153.25 L102.50 151.70 L103.60 150.15 L102.50 148.60 L103.60 147.05 L102.50 145.50 L103.60 143.95 L102.50 142.40 L103.60 140.85 L102.50 139.30 L103.60 137.75 L102.50 136.20 L103.60 134.65 L102.50 133.10 L103.60 131.55 L102.50 130.00 L103.60 128.45 L102.50 126.90 L103.60 125.35 L102.50 123.80 L103.60 122.25 L102.50 120.70 L103.60 119.15 L102.50 117.60 L103.60 116.05 L102.50 114.50 L103.60 112.95 L102.50 111.40 L103.60 109.85 L102.50 108.30 L103.60 106.75 L102.50 105.20 L103.60 103.65 L102.50 102.10 L103.60 100.55 L102.50 99.00 L103.60 97.45 L102.50 95.90 L103.60 94.35 L102.50 92.80 L103.60 91.25 L102.50 89.70 L103.60 88.15 L102.50 86.60 L103.60 85.05 L102.50 83.50 L103.60 81.95 L102.50 80.40 L103.60 78.85 L102.50 77.30 L103.60 75.75 L102.50 74.20 L103.60 72.65 L102.50 71.10 L103.60 69.55 L102.50 68.00 Q103 64.5 102 63.8 Z" fill="url(#shL)"/><ellipse cx="95.2" cy="66.3" rx="2" ry="2.4" fill="#d8d8d8" opacity=".85"/><path d="M117.5 69 Q118.5 60 124 57.2 Q127.3 55.8 130.6 57.2 Q136 60 137.2 69 L136.90 69.00 L138.00 70.90 L136.90 72.80 L138.00 74.70 L136.90 76.60 L138.00 78.50 L136.90 80.40 L138.00 82.30 L136.90 84.20 L138.00 86.10 L136.90 88.00 L138.00 89.90 L136.90 91.80 L138.00 93.70 L136.90 95.60 L138.00 97.50 L136.90 99.40 L138.00 101.30 L136.90 103.20 L138.00 105.10 L136.90 107.00 L138.00 108.90 L136.90 110.80 L138.00 112.70 L136.90 114.60 L138.00 116.50 L136.90 118.40 L138.00 120.30 L136.90 122.20 L138.00 124.10 L136.90 126.00 L138.00 127.90 L136.90 129.80 L138.00 131.70 L136.90 133.60 L138.00 135.50 L136.90 137.40 L138.00 139.30 L136.90 141.20 L138.00 143.10 L136.90 145.00 L138.00 146.90 L136.90 148.80 L138.00 150.70 L136.90 152.60 L138.00 154.50 L136.90 156.40 L138.00 158.30 L136.90 160.20 L138.00 162.10 L136.90 164.00 L137.40 164.50 Q127.3 167.5 117.20 164.50 L117.20 164.50 L117.70 164.00 L116.60 162.10 L117.70 160.20 L116.60 158.30 L117.70 156.40 L116.60 154.50 L117.70 152.60 L116.60 150.70 L117.70 148.80 L116.60 146.90 L117.70 145.00 L116.60 143.10 L117.70 141.20 L116.60 139.30 L117.70 137.40 L116.60 135.50 L117.70 133.60 L116.60 131.70 L117.70 129.80 L116.60 127.90 L117.70 126.00 L116.60 124.10 L117.70 122.20 L116.60 120.30 L117.70 118.40 L116.60 116.50 L117.70 114.60 L116.60 112.70 L117.70 110.80 L116.60 108.90 L117.70 107.00 L116.60 105.10 L117.70 103.20 L116.60 101.30 L117.70 99.40 L116.60 97.50 L117.70 95.60 L116.60 93.70 L117.70 91.80 L116.60 89.90 L117.70 88.00 L116.60 86.10 L117.70 84.20 L116.60 82.30 L117.70 80.40 L116.60 78.50 L117.70 76.60 L116.60 74.70 L117.70 72.80 L116.60 70.90 L117.70 69.00 Z" fill="url(#thrR)"/><path d="M117.5 69 Q118.5 60 124 57.2 Q127.3 55.8 130.6 57.2 Q136 60 137.2 69 L136.90 69.00 L138.00 70.90 L136.90 72.80 L138.00 74.70 L136.90 76.60 L138.00 78.50 L136.90 80.40 L138.00 82.30 L136.90 84.20 L138.00 86.10 L136.90 88.00 L138.00 89.90 L136.90 91.80 L138.00 93.70 L136.90 95.60 L138.00 97.50 L136.90 99.40 L138.00 101.30 L136.90 103.20 L138.00 105.10 L136.90 107.00 L138.00 108.90 L136.90 110.80 L138.00 112.70 L136.90 114.60 L138.00 116.50 L136.90 118.40 L138.00 120.30 L136.90 122.20 L138.00 124.10 L136.90 126.00 L138.00 127.90 L136.90 129.80 L138.00 131.70 L136.90 133.60 L138.00 135.50 L136.90 137.40 L138.00 139.30 L136.90 141.20 L138.00 143.10 L136.90 145.00 L138.00 146.90 L136.90 148.80 L138.00 150.70 L136.90 152.60 L138.00 154.50 L136.90 156.40 L138.00 158.30 L136.90 160.20 L138.00 162.10 L136.90 164.00 L137.40 164.50 Q127.3 167.5 117.20 164.50 L117.20 164.50 L117.70 164.00 L116.60 162.10 L117.70 160.20 L116.60 158.30 L117.70 156.40 L116.60 154.50 L117.70 152.60 L116.60 150.70 L117.70 148.80 L116.60 146.90 L117.70 145.00 L116.60 143.10 L117.70 141.20 L116.60 139.30 L117.70 137.40 L116.60 135.50 L117.70 133.60 L116.60 131.70 L117.70 129.80 L116.60 127.90 L117.70 126.00 L116.60 124.10 L117.70 122.20 L116.60 120.30 L117.70 118.40 L116.60 116.50 L117.70 114.60 L116.60 112.70 L117.70 110.80 L116.60 108.90 L117.70 107.00 L116.60 105.10 L117.70 103.20 L116.60 101.30 L117.70 99.40 L116.60 97.50 L117.70 95.60 L116.60 93.70 L117.70 91.80 L116.60 89.90 L117.70 88.00 L116.60 86.10 L117.70 84.20 L116.60 82.30 L117.70 80.40 L116.60 78.50 L117.70 76.60 L116.60 74.70 L117.70 72.80 L116.60 70.90 L117.70 69.00 Z" fill="url(#shL)"/><path d="M121 63 Q127.3 57 133.5 63" fill="none" stroke="#151515" stroke-width="1.6"/><ellipse cx="126.6" cy="62.3" rx="2.2" ry="1.8" fill="#e6e6e6"/><circle cx="257" cy="127" r="31" fill="#f0f0f2" stroke="#333" stroke-width="1.1"/><path d="M231 127 A26 26 0 1 1 257 153" fill="none" stroke="#666" stroke-width="0.8"/><path d="M257 113.5 L268.7 120.25 L268.7 133.75 L257 140.5 L245.3 133.75 L245.3 120.25 Z" fill="#f0f0f2" stroke="#333" stroke-width="1.1"/><path d="M223 127 H291 M257 93 V161" stroke="#7a7a7a" stroke-width="0.8" stroke-dasharray="11 2 2.5 2" fill="none"/><path d="M245.3 136 V181 M268.7 136 V181 M245.3 177 H268.7" stroke="#8a8a8a" stroke-width="0.8" fill="none"/><path d="M245.30 177.00 L251.30 175.50 L251.30 178.50 Z" fill="#222"/><path d="M268.70 177.00 L262.70 178.50 L262.70 175.50 Z" fill="#222"/><path d="M366 96.5 H475.5 L491.5 101.5 V153 L475.5 158 H366 L349.5 141.5 V113 Z" fill="#f0f0f2"/><path d="M349.5 113 L366 96.5 H475.5 L491.5 101.5 V153 L475.5 158 H366 L349.5 141.5" fill="none" stroke="#333" stroke-width="1.1"/><path d="M361 101.7 H491.5 M361 152.3 H491.5" stroke="#777" stroke-width="0.8"/><path d="M349.5 112.6 H452.5 V142 H349.5" fill="#fbfbfb" stroke="#333" stroke-width="1.1"/><rect x="372.3" y="113.8" width="5.6" height="27" fill="#fff" stroke="#333" stroke-width="0.8"/><path d="M376.3 115 V140" stroke="#8a8a8a" stroke-width="0.6" stroke-dasharray="3 2"/><path d="M379.40 117.5 Q379.40 113.8 382.40 113.8 Q385.40 113.8 385.40 117.5 L385.80 137 Q385.80 140.7 382.80 140.7 Q379.80 140.7 379.80 137 Z" fill="none" stroke="#333" stroke-width="0.85"/><path d="M386.33 117.5 Q386.33 113.8 389.33 113.8 Q392.33 113.8 392.33 117.5 L392.73 137 Q392.73 140.7 389.73 140.7 Q386.73 140.7 386.73 137 Z" fill="none" stroke="#333" stroke-width="0.85"/><path d="M393.26 117.5 Q393.26 113.8 396.26 113.8 Q399.26 113.8 399.26 117.5 L399.66 137 Q399.66 140.7 396.66 140.7 Q393.66 140.7 393.66 137 Z" fill="none" stroke="#333" stroke-width="0.85"/><path d="M400.19 117.5 Q400.19 113.8 403.19 113.8 Q406.19 113.8 406.19 117.5 L406.59 137 Q406.59 140.7 403.59 140.7 Q400.59 140.7 400.59 137 Z" fill="none" stroke="#333" stroke-width="0.85"/><path d="M407.12 117.5 Q407.12 113.8 410.12 113.8 Q413.12 113.8 413.12 117.5 L413.52 137 Q413.52 140.7 410.52 140.7 Q407.52 140.7 407.52 137 Z" fill="none" stroke="#333" stroke-width="0.85"/><path d="M414.05 117.5 Q414.05 113.8 417.05 113.8 Q420.05 113.8 420.05 117.5 L420.45 137 Q420.45 140.7 417.45 140.7 Q414.45 140.7 414.45 137 Z" fill="none" stroke="#333" stroke-width="0.85"/><path d="M420.98 117.5 Q420.98 113.8 423.98 113.8 Q426.98 113.8 426.98 117.5 L427.38 137 Q427.38 140.7 424.38 140.7 Q421.38 140.7 421.38 137 Z" fill="none" stroke="#333" stroke-width="0.85"/><path d="M427.91 117.5 Q427.91 113.8 430.91 113.8 Q433.91 113.8 433.91 117.5 L434.31 137 Q434.31 140.7 431.31 140.7 Q428.31 140.7 428.31 137 Z" fill="none" stroke="#333" stroke-width="0.85"/><path d="M434.84 117.5 Q434.84 113.8 437.84 113.8 Q440.84 113.8 440.84 117.5 L441.24 137 Q441.24 140.7 438.24 140.7 Q435.24 140.7 435.24 137 Z" fill="none" stroke="#333" stroke-width="0.85"/><path d="M441.77 117.5 Q441.77 113.8 444.77 113.8 Q447.77 113.8 447.77 117.5 L448.17 137 Q448.17 140.7 445.17 140.7 Q442.17 140.7 442.17 137 Z" fill="none" stroke="#333" stroke-width="0.85"/><path d="M385.20 117 L380.40 138" stroke="#1a1a1a" stroke-width="1.15"/><path d="M392.13 117 L387.33 138" stroke="#1a1a1a" stroke-width="1.15"/><path d="M399.06 117 L394.26 138" stroke="#1a1a1a" stroke-width="1.15"/><path d="M405.99 117 L401.19 138" stroke="#1a1a1a" stroke-width="1.15"/><path d="M412.92 117 L408.12 138" stroke="#1a1a1a" stroke-width="1.15"/><path d="M419.85 117 L415.05 138" stroke="#1a1a1a" stroke-width="1.15"/><path d="M426.78 117 L421.98 138" stroke="#1a1a1a" stroke-width="1.15"/><path d="M433.71 117 L428.91 138" stroke="#1a1a1a" stroke-width="1.15"/><path d="M440.64 117 L435.84 138" stroke="#1a1a1a" stroke-width="1.15"/><path d="M447.57 117 L442.77 138" stroke="#1a1a1a" stroke-width="1.15"/><rect x="448.4" y="113.9" width="3.8" height="26.7" rx="1.9" fill="#fff" stroke="#333" stroke-width="0.85"/><circle cx="357" cy="127.2" r="14.6" fill="#f0f0f2" stroke="#333" stroke-width="1.1"/><path d="M476.3 113.7 L466.8 127 L476.3 140.5 Z" fill="#f0f0f2" stroke="#333" stroke-width="0.9"/><path d="M476.3 113.7 V140.5 M476.3 113.7 H491.5 M476.3 120 H491.5 M476.3 133.7 H491.5 M476.3 140.5 H491.5" stroke="#333" stroke-width="0.9" fill="none"/><path d="M338 127 H500" stroke="#7a7a7a" stroke-width="0.75" stroke-dasharray="11 2 2.5 2" fill="none"/><path d="M357 106 V148" stroke="#7a7a7a" stroke-width="0.75" stroke-dasharray="11 2 2.5 2" fill="none"/><path d="M342.5 128 V182 M349.5 143 V182 M491.5 154 V182 M320 177.5 H342.5 M349.5 177.5 H491.5" stroke="#8a8a8a" stroke-width="0.8" fill="none"/><path d="M342.50 177.50 L336.00 179.00 L336.00 176.00 Z" fill="#222"/><path d="M349.50 177.50 L356.00 176.00 L356.00 179.00 Z" fill="#222"/><path d="M491.50 177.50 L485.00 179.00 L485.00 176.00 Z" fill="#222"/><path d="M492 96.5 H520 M492 158 H520 M510.8 96.5 V158" stroke="#8a8a8a" stroke-width="0.8" fill="none"/><path d="M510.80 96.80 L512.30 103.30 L509.30 103.30 Z" fill="#222"/><path d="M510.80 157.70 L509.30 151.20 L512.30 151.20 Z" fill="#222"/><path d="M475.8 72 V112 M491.6 72 V101 M462 77 H475.8 M491.6 77 H504" stroke="#8a8a8a" stroke-width="0.8" fill="none"/><path d="M475.80 77.00 L469.30 78.50 L469.30 75.50 Z" fill="#222"/><path d="M491.60 77.00 L498.10 75.50 L498.10 78.50 Z" fill="#222"/><path d="M327.5 96.4 H335.5 L372.4 148.1" stroke="#444" stroke-width="0.8" fill="none"/><path d="M348.40 115.20 L343.37 110.81 L345.81 109.05 Z" fill="#222"/><path d="M365.60 138.80 L370.63 143.19 L368.19 144.95 Z" fill="#222"/><path d="M437 80.5 H398.3 L377 113" stroke="#444" stroke-width="0.8" fill="none"/><path d="M377.00 113.00 L379.31 106.74 L381.82 108.39 Z" fill="#222"/><path d="M590.2 100.2 H609.8 L618 108.7 V163 L614.9 178.6 H585.9 L583.1 163 V108.7 Z" fill="#f0f0f2" stroke="#333" stroke-width="1.1"/><path d="M586.3 108 V178 M614.7 108 V178" stroke="#888" stroke-width="0.7"/><path d="M592.4 104.2 V111.9 M608.2 104.2 V111.9" stroke="#333" stroke-width="0.9"/><rect x="592.4" y="111.9" width="15.8" height="44.900000000000006" fill="#f5f5f7" stroke="#333" stroke-width="1.1"/><path d="M592.4 113.7 H608.2" stroke="#333" stroke-width="1.2"/><path d="M593.6 114.4 L607 156 M607 114.4 L593.6 156 M593.6 113.9 V156.5 M607 113.9 V156.5" stroke="#777" stroke-width="0.6" fill="none"/><circle cx="600.3" cy="104.2" r="7.9" fill="#f0f0f2" stroke="#333" stroke-width="1.1"/><path d="M592.6 178.6 V169.2 L600.3 164.8 L608 169.2 V178.6" fill="#f0f0f2" stroke="#333" stroke-width="0.9"/><path d="M592.6 169.4 H608 M596.1 169.4 V178.6 M598 169.4 V178.6 M602.6 169.4 V178.6 M604.5 169.4 V178.6" stroke="#333" stroke-width="0.7" fill="none"/><path d="M600.3 92 V183" stroke="#7a7a7a" stroke-width="0.75" stroke-dasharray="11 2 2.5 2" fill="none"/><path d="M655.5 100.2 H675.0999999999999 L683.3 108.7 V163 L680.1999999999999 178.6 H651.1999999999999 L648.4 163 V108.7 Z" fill="#f0f0f2" stroke="#333" stroke-width="1.1"/><path d="M651.5999999999999 108 V178 M680.0 108 V178" stroke="#888" stroke-width="0.7"/><path d="M657.6999999999999 108.2 V116.3 M673.5 108.2 V116.3" stroke="#333" stroke-width="0.9"/><rect x="657.6999999999999" y="116.3" width="15.8" height="40.500000000000014" fill="#f5f5f7" stroke="#333" stroke-width="1.1"/><path d="M657.6999999999999 118.1 H673.5" stroke="#333" stroke-width="1.2"/><path d="M658.9 118.8 L672.3 156 M672.3 118.8 L658.9 156 M658.9 118.3 V156.5 M672.3 118.3 V156.5" stroke="#777" stroke-width="0.6" fill="none"/><circle cx="665.5999999999999" cy="108.2" r="7.9" fill="#f0f0f2" stroke="#333" stroke-width="1.1"/><path d="M657.9 178.6 V169.2 L665.5999999999999 164.8 L673.3 169.2 V178.6" fill="#f0f0f2" stroke="#333" stroke-width="0.9"/><path d="M657.9 169.4 H673.3 M661.4 169.4 V178.6 M663.3 169.4 V178.6 M667.9 169.4 V178.6 M669.8 169.4 V178.6" stroke="#333" stroke-width="0.7" fill="none"/><path d="M665.5999999999999 92 V183" stroke="#7a7a7a" stroke-width="0.75" stroke-dasharray="11 2 2.5 2" fill="none"/><path d="M665.6 78.5 V87" stroke="#111" stroke-width="1.2"/><path d="M665.60 91.20 L663.70 85.20 L667.50 85.20 Z" fill="#111"/></svg>
<div style="left:0;top:0;width:950px;height:222px;-webkit-text-stroke:0"><div style="left:30.50px;top:76.00px;width:600px;height:30px;line-height:30px;text-align:center;font-size:12px;">d</div>
<div style="left:117.50px;top:57.60px;width:600px;height:30px;line-height:30px;text-align:center;font-size:11.8px;">Spacer</div>
<div style="left:184.00px;top:56.50px;width:600px;height:30px;line-height:30px;text-align:center;font-size:12px;">V</div>
<div style="left:-43.00px;top:156.50px;width:600px;height:30px;line-height:30px;text-align:center;font-size:12px;">S</div>
<div style="left:27.70px;top:156.50px;width:600px;height:30px;line-height:30px;text-align:center;font-size:11.5px;">H</div>
<div style="left:120.50px;top:156.50px;width:600px;height:30px;line-height:30px;text-align:center;font-size:12px;color:#1f8bd6;">L</div>
<div style="left:490px;top:117.5px;width:30px;height:20px;line-height:20px;text-align:center;font-size:12px;color:#1f8bd6;transform:rotate(-90deg)">M</div>
<div style="left:332.30px;top:33.30px;width:600px;height:30px;line-height:30px;text-align:center;font-size:11.5px;">Load</div>
<div style="left:300.30px;top:53.80px;width:600px;height:30px;line-height:30px;text-align:center;font-size:12px;">min.</div>
<div style="left:365.50px;top:53.80px;width:600px;height:30px;line-height:30px;text-align:center;font-size:11.7px;">max.</div></div>
<svg style="left:0;top:0;pointer-events:none" width="950" height="846" viewBox="0 0 950 846">
<defs><mask id="wm" maskUnits="userSpaceOnUse" x="0" y="0" width="950" height="846">
<g fill="#fff" stroke="#fff">
<path stroke="none" fill-rule="evenodd" d="M324 399 H361 Q373 399 373 411 V435 Q373 447 361 447 H324 Z M336 410 H358 V417 H336 Z M336 429 H358 V436 H336 Z"/>
<circle cx="398" cy="423" r="24" stroke="none"/>
</g>
<circle cx="398" cy="423" r="16.5" fill="none" stroke="#000" stroke-width="3.2" stroke-dasharray="7 3.5"/>
<circle cx="398" cy="423" r="10.5" fill="#000"/>
<circle cx="398" cy="423" r="6.5" fill="#fff"/>
<g fill="none" stroke="#fff" stroke-width="12">
<path d="M428 405 H452 Q461 405 461 414 V417 Q461 426 452 426 H440 L461 448"/>
<path d="M470 405 H494 Q503 405 503 414 V417 Q503 426 494 426 H482 L503 448"/>
<path d="M529 399 V440 H568 V399"/>
<path d="M582 447 V405 H621 V447"/>
</g>
</mask></defs>
<rect x="300" y="380" width="360" height="90" fill="#000" fill-opacity="0.05" mask="url(#wm)"/>
</svg>
</body></html>
